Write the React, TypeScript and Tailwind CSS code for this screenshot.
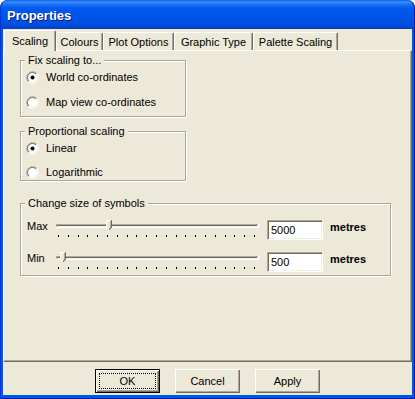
import React from "react";

const FONT = "font-['Liberation_Sans',Arial,sans-serif]";

const TABS = [
  { label: "Scaling", w: "w-[52px]", active: true },
  { label: "Colours", w: "w-[47px]", active: false },
  { label: "Plot Options", w: "w-[71px]", active: false },
  { label: "Graphic Type", w: "w-[79px]", active: false },
  { label: "Palette Scaling", w: "w-[85px]", active: false },
];

const Radio = ({ checked }: { checked?: boolean }) => (
  <svg width="13" height="13" viewBox="0 0 13 13" className="block shrink-0">
    <circle cx="6.5" cy="6.5" r="5.5" fill="#fff" />
    <path d="M2.26 10.74A6 6 0 0 1 10.74 2.26" fill="none" stroke="#aca899" />
    <path d="M10.74 2.26A6 6 0 0 1 2.26 10.74" fill="none" stroke="#fff" />
    <path d="M2.96 10.04A5 5 0 0 1 10.04 2.96" fill="none" stroke="#716f64" />
    <path d="M10.04 2.96A5 5 0 0 1 2.96 10.04" fill="none" stroke="#f1efe2" />
    {checked && <circle cx="6.5" cy="6.5" r="2" fill="#000" />}
  </svg>
);

const RadioRow = ({ label, checked }: { label: string; checked?: boolean }) => (
  <div className="flex h-[13px] items-center">
    <Radio checked={checked} />
    <span className="ml-[7px] leading-[13px]">{label}</span>
  </div>
);

// etched group box, caption sits over the top line
const Group = ({
  title,
  className,
  children,
}: {
  title: string;
  className: string;
  children: React.ReactNode;
}) => (
  <div
    className={`relative border border-[#aca899] shadow-[inset_1px_1px_0_#fff,1px_1px_0_#fff] ${className}`}
  >
    <div className="absolute left-[4px] top-[-7px] bg-[#ece9d8] px-[3px] leading-[13px]">
      {title}
    </div>
    {children}
  </div>
);

const Slider = ({ thumb }: { thumb: number }) => {
  const ticks = Array.from({ length: 21 }, (_, i) => 2 + Math.round(i * 9.8));
  const t = thumb;
  return (
    <svg width="203" height="19" className="block shrink-0">
      <rect x="0" y="4" width="202" height="1" fill="#aca899" />
      <rect x="0" y="4" width="1" height="3" fill="#aca899" />
      <rect x="1" y="5" width="200" height="1" fill="#716f64" />
      <rect x="1" y="6" width="201" height="1" fill="#f1efe2" />
      <rect x="0" y="7" width="203" height="1" fill="#fff" />
      <rect x="202" y="4" width="1" height="4" fill="#fff" />
      {ticks.map((x) => (
        <rect key={x} x={x} y="15" width="1" height="2" fill="#000" />
      ))}
      <polygon points={`${t},0 ${t + 6},0 ${t + 6},8 ${t + 3},11 ${t},8`} fill="#ece9d8" />
      <rect x={t} y="0" width="5" height="1" fill="#fff" />
      <rect x={t} y="0" width="1" height="8" fill="#fff" />
      <rect x={t + 1} y="8" width="1" height="1" fill="#fff" />
      <rect x={t + 2} y="9" width="1" height="1" fill="#fff" />
      <rect x={t + 5} y="0" width="1" height="8" fill="#716f64" />
      <rect x={t + 4} y="1" width="1" height="7" fill="#aca899" />
      <rect x={t + 4} y="8" width="1" height="1" fill="#716f64" />
      <rect x={t + 3} y="9" width="1" height="1" fill="#716f64" />
      <rect x={t + 3} y="8" width="1" height="1" fill="#aca899" />
    </svg>
  );
};

const SizeRow = ({ label, thumb, value }: { label: string; thumb: number; value: string }) => (
  <div className="flex items-start pl-[6px]">
    <div className="w-[29px] h-[13px] leading-[13px]">{label}</div>
    <Slider thumb={thumb} />
    <div className="ml-[8px] w-[56px] h-[20px] border border-[#aca899] border-r-white border-b-white shadow-[inset_1px_1px_0_#716f64,inset_-1px_-1px_0_#f1efe2] bg-white pl-[3px] pt-[3px] leading-[13px]">
      {value}
    </div>
    <div className="ml-[7px] mt-[1px] h-[13px] leading-[13px] font-bold">metres</div>
  </div>
);

const Button = ({ label, def }: { label: string; def?: boolean }) => (
  <div
    className={`w-[65px] h-[24px] bg-[#ece9d8] flex items-center justify-center ${
      def
        ? "border border-black shadow-[inset_1px_1px_0_#fff,inset_-1px_-1px_0_#716f64,inset_-2px_-2px_0_#aca899]"
        : "shadow-[inset_1px_1px_0_#fff,inset_-1px_-1px_0_#716f64,inset_-2px_-2px_0_#aca899]"
    }`}
  >
    {def ? (
      <div className="w-[57px] h-[16px] border border-dotted border-black flex items-center justify-center leading-[13px]">
        {label}
      </div>
    ) : (
      <span className="leading-[13px]">{label}</span>
    )}
  </div>
);

export default function App() {
  return (
    <div className={`w-[415px] h-[399px] flex flex-col ${FONT} text-[11px] text-black`}>
      <div className="h-[29px] shrink-0 rounded-t-[8px] bg-[linear-gradient(to_bottom,#0a5fe8_0%,#3d8ffc_7%,#1c73f7_14%,#0058ee_30%,#0055e8_60%,#0050e0_82%,#0046d0_93%,#0a3fc4_100%)] shadow-[inset_1px_0_0_#0831d9,inset_-1px_0_0_#001ea0] flex items-center pl-[7px] pt-[3px]">
        <span className="text-[13px] font-bold text-white [text-shadow:1px_1px_0_#0a1883]">
          Properties
        </span>
      </div>
      <div className="flex-1 flex bg-[#0055ea] px-[3px] pb-[4px] shadow-[inset_1px_0_0_#0831d9,inset_-1px_0_0_#001ea0,inset_0_-1px_0_#001ea0]">
        <div className="flex-1 flex flex-col bg-[#ece9d8]">
          <div className="h-[21px] shrink-0 flex items-end pl-[1px]">
            {TABS.map((tab) =>
              tab.active ? (
                <div
                  key={tab.label}
                  className={`${tab.w} h-[21px] -mb-px relative z-10 bg-[#ece9d8] rounded-t-[2px] border-t border-l border-white border-r border-r-[#716f64] shadow-[inset_-1px_0_0_#aca899] text-center pt-[4px] leading-[13px]`}
                >
                  {tab.label}
                </div>
              ) : (
                <div
                  key={tab.label}
                  className={`${tab.w} h-[18px] rounded-t-[2px] border-t border-l border-white border-r border-r-[#716f64] shadow-[inset_-1px_0_0_#aca899] text-center pt-[3px] leading-[13px]`}
                >
                  {tab.label}
                </div>
              )
            )}
          </div>
          <div className="h-[312px] shrink-0 border border-white border-r-[#716f64] border-b-[#716f64] shadow-[inset_-1px_-1px_0_#aca899] pl-[16px] pt-[9px]">
            <Group title="Fix scaling to..." className="w-[166px] h-[57px] pl-[5px] pt-[10px] flex flex-col gap-[12px]">
              <RadioRow label="World co-ordinates" checked />
              <RadioRow label="Map view co-ordinates" />
            </Group>
            <Group title="Proportional scaling" className="mt-[14px] w-[166px] h-[50px] pl-[5px] pt-[10px] flex flex-col gap-[11px]">
              <RadioRow label="Linear" checked />
              <RadioRow label="Logarithmic" />
            </Group>
            <Group title="Change size of symbols" className="mt-[22px] w-[371px] h-[73px] pt-[16px] flex flex-col gap-[12px]">
              <SizeRow label="Max" thumb={50} value="5000" />
              <SizeRow label="Min" thumb={4} value="500" />
            </Group>
          </div>
          <div className="mt-[7px] flex justify-center gap-[15px]">
            <Button label="OK" def />
            <Button label="Cancel" />
            <Button label="Apply" />
          </div>
        </div>
      </div>
    </div>
  );
}
